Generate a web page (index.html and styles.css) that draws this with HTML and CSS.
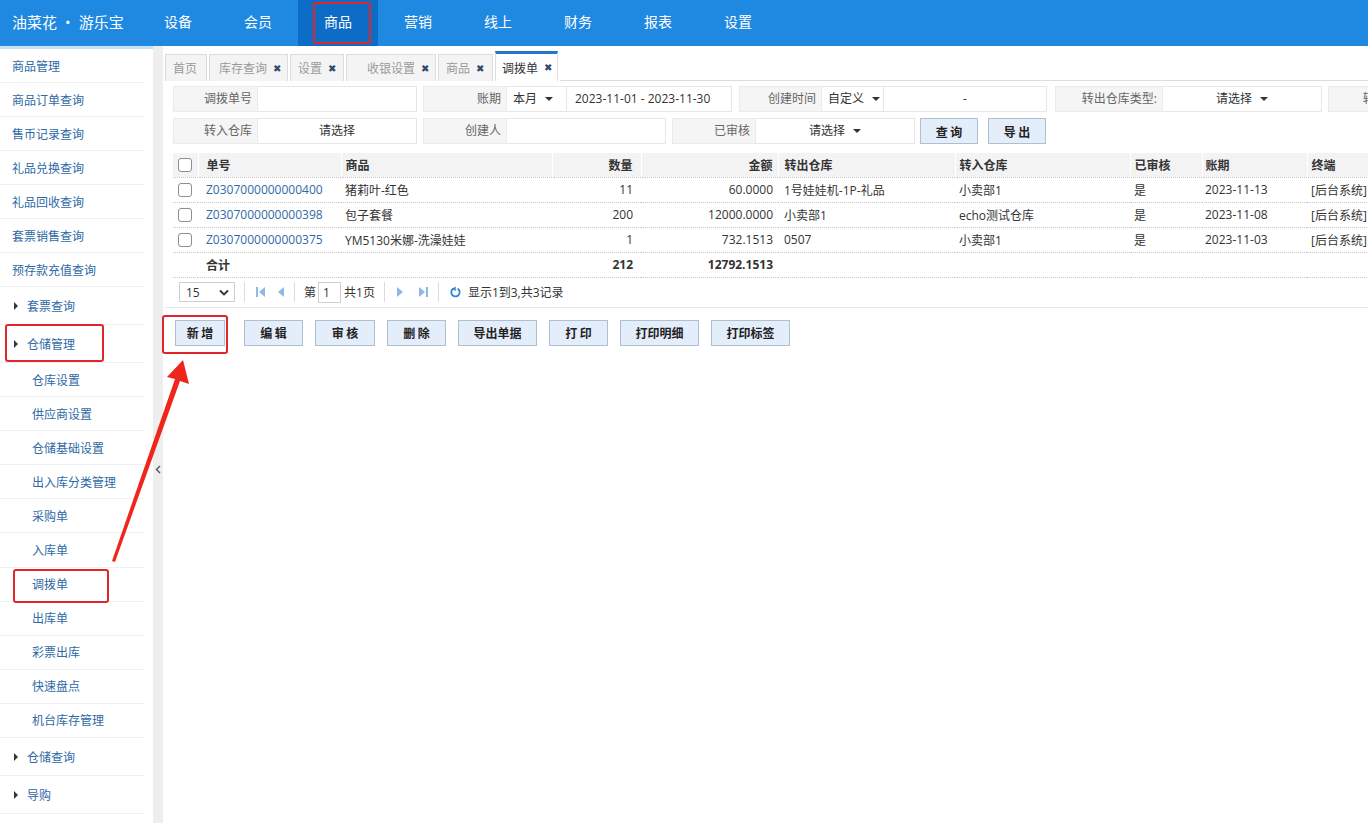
FILE: index.html
```html
<!DOCTYPE html>
<html lang="zh-CN">
<head>
<meta charset="utf-8">
<title>调拨单</title>
<link rel="stylesheet" href="styles.css">
</head>
<body>
<header class="topbar">
  <div class="logo">油菜花 • 游乐宝</div>
  <nav class="nav">
    <span class="nav-item">设备</span>
    <span class="nav-item">会员</span>
    <span class="nav-item active">商品</span>
    <span class="nav-item">营销</span>
    <span class="nav-item">线上</span>
    <span class="nav-item">财务</span>
    <span class="nav-item">报表</span>
    <span class="nav-item">设置</span>
  </nav>
</header>
<div class="layout">
  <aside class="sidebar">
    <ul class="menu">
      <li class="menu-item">商品管理</li>
      <li class="menu-item">商品订单查询</li>
      <li class="menu-item">售币记录查询</li>
      <li class="menu-item">礼品兑换查询</li>
      <li class="menu-item">礼品回收查询</li>
      <li class="menu-item">套票销售查询</li>
      <li class="menu-item">预存款充值查询</li>
      <li class="menu-item group"><span class="caret"></span>套票查询</li>
      <li class="menu-item group"><span class="caret"></span>仓储管理</li>
      <li class="menu-item sub">仓库设置</li>
      <li class="menu-item sub">供应商设置</li>
      <li class="menu-item sub">仓储基础设置</li>
      <li class="menu-item sub">出入库分类管理</li>
      <li class="menu-item sub">采购单</li>
      <li class="menu-item sub">入库单</li>
      <li class="menu-item sub">调拨单</li>
      <li class="menu-item sub">出库单</li>
      <li class="menu-item sub">彩票出库</li>
      <li class="menu-item sub">快速盘点</li>
      <li class="menu-item sub">机台库存管理</li>
      <li class="menu-item group"><span class="caret"></span>仓储查询</li>
      <li class="menu-item group"><span class="caret"></span>导购</li>
    </ul>
  </aside>
  <div class="gutter">
    <svg class="collapse" width="6" height="9" viewBox="0 0 6 9"><polyline points="5,1 1.5,4.5 5,8" fill="none" stroke="#555" stroke-width="1.4"/></svg>
  </div>
  <main class="main">
    <div class="tabs">
      <div class="tab t-home">首页</div>
      <div class="tab t-stock">库存查询<span class="x">✖</span></div>
      <div class="tab t-set">设置<span class="x">✖</span></div>
      <div class="tab t-cash">收银设置<span class="x">✖</span></div>
      <div class="tab t-goods">商品<span class="x">✖</span></div>
      <div class="tab active t-trans">调拨单<span class="x">✖</span></div>
      <div class="tab-rest"></div>
    </div>

    <div class="filters">
      <div class="frow">
        <div class="fgroup"><label class="flabel w85">调拨单号</label><div class="finput w159"></div></div>
        <div class="fgroup g6"><label class="flabel w84">账期</label><div class="fselect w60 left">本月<span class="tri"></span></div><div class="finput w165 date">2023-11-01 - 2023-11-30</div></div>
        <div class="fgroup g7"><label class="flabel w83">创建时间</label><div class="fselect w62 left">自定义<span class="tri"></span></div><div class="finput w163 center">-</div></div>
        <div class="fgroup g8"><label class="flabel w108">转出仓库类型:</label><div class="fselect w159 center">请选择<span class="tri"></span></div></div>
        <div class="fgroup g6"><label class="flabel w116">转入仓库类型:</label></div>
      </div>
      <div class="frow">
        <div class="fgroup"><label class="flabel w85">转入仓库</label><div class="fselect w159 center">请选择</div></div>
        <div class="fgroup g6"><label class="flabel w84">创建人</label><div class="finput w159"></div></div>
        <div class="fgroup g6"><label class="flabel w84">已审核</label><div class="fselect w159 center">请选择<span class="tri"></span></div></div>
        <button class="fbtn b-query">查 询</button>
        <button class="fbtn b-export">导 出</button>
      </div>
    </div>

    <table class="grid">
      <colgroup>
        <col class="c-chk"><col class="c-no"><col class="c-goods"><col class="c-qty"><col class="c-amt"><col class="c-out"><col class="c-in"><col class="c-chkd"><col class="c-period"><col class="c-term">
      </colgroup>
      <thead>
        <tr>
          <th class="chk"><span class="box"></span></th>
          <th class="no">单号</th>
          <th>商品</th>
          <th class="num qty">数量</th>
          <th class="num">金额</th>
          <th class="out">转出仓库</th>
          <th>转入仓库</th>
          <th>已审核</th>
          <th class="period">账期</th>
          <th>终端</th>
        </tr>
      </thead>
      <tbody>
        <tr>
          <td class="chk"><span class="box"></span></td>
          <td class="no link">Z0307000000000400</td>
          <td>猪莉叶-红色</td>
          <td class="num qty">11</td>
          <td class="num">60.0000</td>
          <td class="out">1号娃娃机-1P-礼品</td>
          <td>小卖部1</td>
          <td>是</td>
          <td class="period">2023-11-13</td>
          <td>[后台系统]</td>
        </tr>
        <tr>
          <td class="chk"><span class="box"></span></td>
          <td class="no link">Z0307000000000398</td>
          <td>包子套餐</td>
          <td class="num qty">200</td>
          <td class="num">12000.0000</td>
          <td class="out">小卖部1</td>
          <td>echo测试仓库</td>
          <td>是</td>
          <td class="period">2023-11-08</td>
          <td>[后台系统]</td>
        </tr>
        <tr>
          <td class="chk"><span class="box"></span></td>
          <td class="no link">Z0307000000000375</td>
          <td>YM5130米娜-洗澡娃娃</td>
          <td class="num qty">1</td>
          <td class="num">732.1513</td>
          <td class="out">0507</td>
          <td>小卖部1</td>
          <td>是</td>
          <td class="period">2023-11-03</td>
          <td>[后台系统]</td>
        </tr>
        <tr class="total">
          <td class="chk"></td>
          <td class="no">合计</td>
          <td></td>
          <td class="num qty">212</td>
          <td class="num">12792.1513</td>
          <td class="out"></td>
          <td></td>
          <td></td>
          <td class="period"></td>
          <td></td>
        </tr>
      </tbody>
    </table>

    <div class="pager">
      <div class="psize">15<svg class="chev" width="10" height="7" viewBox="0 0 10 7"><polyline points="1,1.5 5,5.5 9,1.5" fill="none" stroke="#333" stroke-width="1.8"/></svg></div>
      <span class="psep"></span>
      <svg class="pico first" width="10" height="12" viewBox="0 0 10 12"><rect x="0" y="1" width="2" height="10" fill="#8db9e8"/><polygon points="9,1 3,6 9,11" fill="#8db9e8"/></svg>
      <svg class="pico prev" width="8" height="12" viewBox="0 0 8 12"><polygon points="7,1 1,6 7,11" fill="#8db9e8"/></svg>
      <span class="psep"></span>
      <span class="ptext">第</span><span class="pinput">1</span><span class="ptext">共1页</span>
      <span class="psep"></span>
      <svg class="pico next" width="8" height="12" viewBox="0 0 8 12"><polygon points="1,1 7,6 1,11" fill="#8db9e8"/></svg>
      <svg class="pico last" width="10" height="12" viewBox="0 0 10 12"><polygon points="1,1 7,6 1,11" fill="#8db9e8"/><rect x="8" y="1" width="2" height="10" fill="#8db9e8"/></svg>
      <span class="psep"></span>
      <svg class="pico refresh" width="11" height="12" viewBox="0 0 11 12"><path d="M7.6 2.6 A4.2 4.2 0 1 1 3.2 2.7" fill="none" stroke="#2f86d6" stroke-width="1.8"/><polygon points="5.6,0.4 5.8,5 1.6,3" fill="#2f86d6"/></svg>
      <span class="ptext info">显示1到3,共3记录</span>
    </div>

    <div class="actions">
      <button class="abtn w50">新 增</button>
      <button class="abtn w59 ml19">编 辑</button>
      <button class="abtn w60">审 核</button>
      <button class="abtn w59">删 除</button>
      <button class="abtn w79">导出单据</button>
      <button class="abtn w59">打 印</button>
      <button class="abtn w79">打印明细</button>
      <button class="abtn w79">打印标签</button>
    </div>
  </main>
</div>

<div class="mark m-nav"></div>
<div class="mark m-store"></div>
<div class="mark m-trans"></div>
<div class="mark m-add"></div>
<svg class="arrow" width="1368" height="823" viewBox="0 0 1368 823">
  <polygon points="112,561 175,379 167,377 183,360 189,384 180,381 115,562" fill="#f0261d"/>
</svg>
</body>
</html>
```

FILE: styles.css
```css
* { box-sizing: border-box; }
html, body { margin: 0; padding: 0; }
body {
  width: 1368px;
  height: 823px;
  overflow: hidden;
  background: #fff;
  font-family: "Open Sans", "Noto Sans CJK SC", sans-serif;
  font-size: 12px;
  color: #333;
  position: relative;
}

/* top bar */
.topbar {
  height: 46px;
  background: #1f89e1;
  display: flex;
  align-items: stretch;
  color: #fff;
}
.logo {
  width: 138px;
  padding-left: 12px;
  font-size: 15px;
  line-height: 44px;
  font-family: "Noto Sans CJK SC", sans-serif;
  white-space: nowrap;
}
.nav { display: flex; }
.nav-item {
  width: 80px;
  text-align: center;
  font-size: 14px;
  line-height: 43px;
  font-family: "Noto Sans CJK SC", sans-serif;
}
.nav-item.active { background: #0c6cc6; }

/* layout */
.layout {
  display: flex;
  height: 777px;
}
.sidebar {
  width: 153px;
  flex: none;
  background: #fff;
  border-top: 3px solid #c4e2f8;
}
.menu {
  list-style: none;
  margin: 0 8px 0 0;
  padding: 0;
}
.menu-item {
  height: 34px;
  border-bottom: 1px solid #eef0f2;
  display: flex;
  align-items: center;
  padding-left: 12px;
  color: #2e69a6;
  white-space: nowrap;
}
.menu-item.group {
  height: 38px;
  padding-left: 14px;
}
.menu-item.sub { height: 34.1px; padding-left: 32px; }
.caret {
  width: 0;
  height: 0;
  border-left: 4px solid #2b3a4a;
  border-top: 4px solid transparent;
  border-bottom: 4px solid transparent;
  margin-right: 9px;
}
.gutter {
  width: 10px;
  flex: none;
  background: #eeeeee;
  padding-top: 419px;
  padding-left: 2px;
}
.collapse { display: block; }

.main {
  flex: 1;
  min-width: 0;
  overflow: hidden;
  padding-left: 2px;
}

/* tabs */
.tabs {
  display: flex;
  align-items: flex-end;
  height: 35px;
}
.tab {
  height: 27px;
  border: 1px solid #dcdcdc;
  border-bottom: none;
  background: #f4f4f4;
  color: #9a9a9a;
  display: flex;
  align-items: center;
  padding: 0 7px;
  margin-right: 2px;
  white-space: nowrap;
}
.x {
  font-family: "DejaVu Sans", sans-serif;
  font-size: 10px;
  color: #2c4a6e;
  margin-left: 6px;
}
.t-home { width: 42px; }
.t-stock { width: 79px; padding-left: 9px; }
.t-set { width: 54px; }
.t-cash { width: 90px; padding-left: 20px; }
.t-goods { width: 55px; }
.t-trans { width: 63px; }
.tab.active {
  height: 30px;
  background: #fff;
  border-top: 3px solid #1f78c8;
  color: #333;
  padding-left: 6px;
}
.tab-rest {
  flex: 1;
  border-bottom: 1px solid #dcdcdc;
  height: 1px;
}

/* filters */
.filters {
  margin: 5px 0 0 8px;
}
.frow {
  display: flex;
  height: 26px;
  margin-bottom: 6px;
  white-space: nowrap;
}
.fgroup { display: flex; flex: none; }
.g6 { margin-left: 6px; }
.g7 { margin-left: 7px; }
.g8 { margin-left: 8px; }
.flabel {
  background: #f5f5f5;
  border: 1px solid #ebebeb;
  color: #666;
  text-align: right;
  padding-right: 5px;
  line-height: 24px;
  flex: none;
}
.finput, .fselect {
  border: 1px solid #e6e6e6;
  border-left: none;
  background: #fff;
  line-height: 24px;
  color: #333;
  flex: none;
  display: flex;
  align-items: center;
}
.finput.date { padding-left: 8px; }
.center { justify-content: center; }
.left { padding-left: 6px; }
.tri {
  width: 0;
  height: 0;
  border-top: 4px solid #333;
  border-left: 4px solid transparent;
  border-right: 4px solid transparent;
  margin-left: 8px;
}
.w50 { width: 50px; }
.w59 { width: 59px; }
.w60 { width: 60px; }
.w62 { width: 62px; }
.w79 { width: 79px; }
.w83 { width: 83px; }
.w84 { width: 84px; }
.w85 { width: 85px; }
.w108 { width: 108px; }
.w116 { width: 116px; }
.w159 { width: 159px; }
.w163 { width: 163px; }
.w165 { width: 165px; }
.fbtn, .abtn {
  height: 26px;
  background: #e4eefb;
  border: 1px solid #aebfd3;
  font-family: "Noto Sans CJK SC", sans-serif;
  font-weight: 700;
  font-size: 12px;
  color: #222;
  padding: 0;
  border-radius: 0;
}
.fbtn { width: 58px; }
.b-query { margin-left: 5px; }
.b-export { margin-left: 10px; }

/* grid */
.grid {
  margin: 9px 0 0 8px;
  border-collapse: collapse;
  table-layout: fixed;
  width: 1234px;
}
.c-chk { width: 25px; }
.c-no { width: 143px; }
.c-goods { width: 211px; }
.c-qty { width: 89px; }
.c-amt { width: 137px; }
.c-out { width: 177px; }
.c-in { width: 175px; }
.c-chkd { width: 72px; }
.c-period { width: 105px; }
.c-term { width: 100px; }
.grid th, .grid td {
  text-align: left;
  padding: 0 4px;
  white-space: nowrap;
  overflow: hidden;
  border-bottom: 1px dotted #c9c9c9;
}
.grid th {
  height: 24px;
  background: #f3f3f3;
  border-right: 1px solid #fff;
  font-weight: 700;
  color: #333;
}
.grid td { height: 25px; color: #333; }
.grid .chk { padding: 0 0 0 5px; }
.grid .no { padding-left: 8px; }
.grid .num { text-align: right; padding-right: 5px; }
.grid .qty { padding-right: 8px; }
.grid .out { padding-left: 6px; }
.grid .period { padding-left: 3px; }
.grid td.link { color: #2f6aa8; }
.total td { font-weight: 700; }
.box {
  display: block;
  width: 14px;
  height: 14px;
  border: 1px solid #8e8e8e;
  border-radius: 3px;
  background: #fff;
}

/* pager */
.pager {
  display: flex;
  align-items: center;
  height: 30px;
  padding: 2px 0 2px 14px;
  border-bottom: 1px solid #e8e8e8;
  white-space: nowrap;
}
.psize {
  width: 56px;
  height: 20px;
  border: 1px solid #cfcfcf;
  display: flex;
  align-items: center;
  justify-content: space-between;
  padding: 0 5px 0 6px;
  color: #333;
}
.psep {
  width: 1px;
  height: 20px;
  background: #dcdcdc;
  margin: 0 9px;
}
.pico { display: block; }
.first { margin: 0 11px 0 2px; }
.prev { margin-right: 0; }
.next { margin-left: 2px; margin-right: 14px; }
.last { margin-right: 1px; }
.refresh { margin-left: 2px; margin-right: 7px; }
.ptext { color: #333; }
.pinput {
  width: 23px;
  height: 21px;
  border: 1px solid #d0d0d0;
  margin: 0 3px 0 2px;
  padding-left: 4px;
  line-height: 19px;
}

/* actions */
.actions {
  display: flex;
  gap: 12px;
  margin-top: 12px;
  padding-left: 10px;
}
.ml19 { margin-left: 7px; }

/* annotations */
.mark {
  position: absolute;
  border: 2px solid #e0262a;
  border-radius: 3px;
}
.m-nav { left: 313px; top: 2px; width: 58px; height: 42px; }
.m-store { left: 5px; top: 324px; width: 99px; height: 38px; }
.m-trans { left: 13px; top: 569px; width: 96px; height: 34px; }
.m-add { left: 162px; top: 315px; width: 66px; height: 39px; }
.arrow {
  position: absolute;
  left: 0;
  top: 0;
  pointer-events: none;
}
```
